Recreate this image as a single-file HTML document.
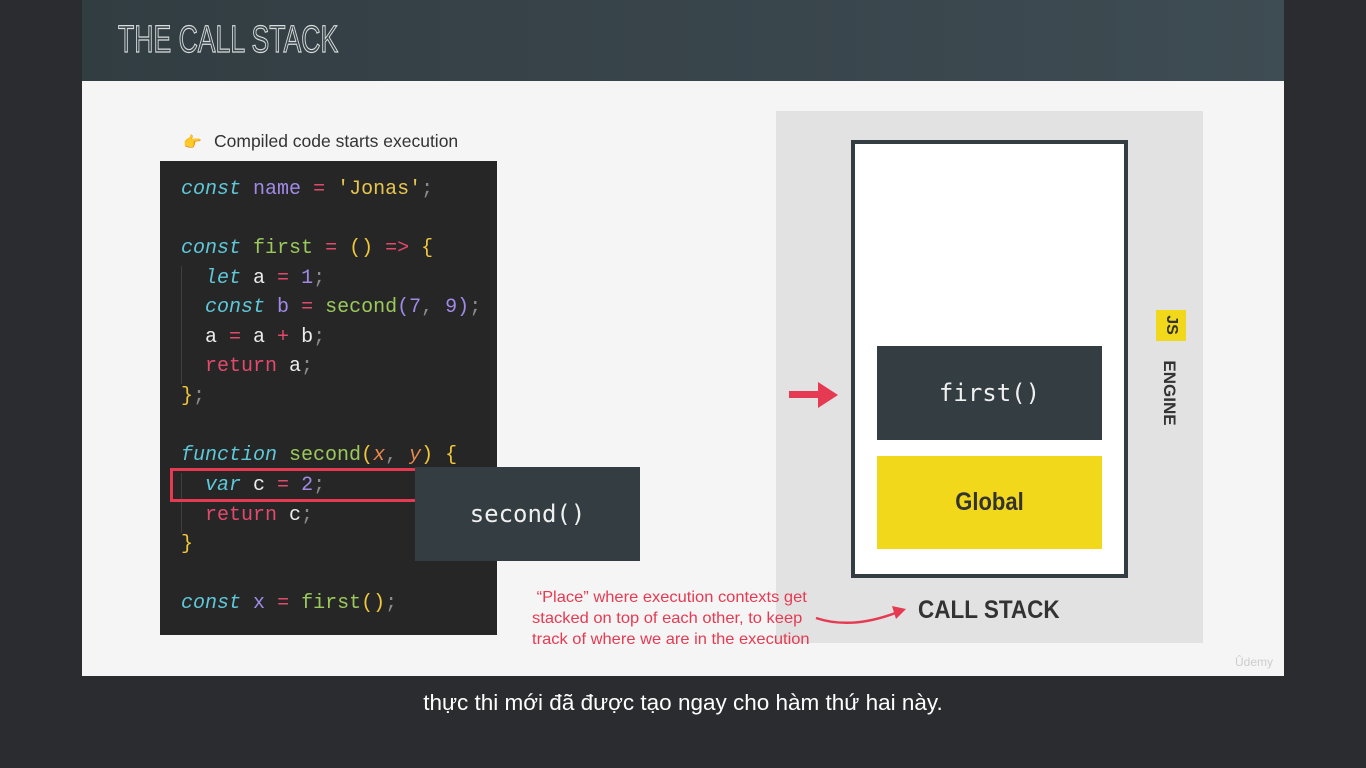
<!DOCTYPE html>
<html><head><meta charset="utf-8"><style>
*{margin:0;padding:0;box-sizing:border-box}
body{width:1366px;height:768px;background:#2b2c2f;position:relative;overflow:hidden;font-family:"Liberation Sans",sans-serif}
.abs{position:absolute}
#hdr{left:82px;top:0;width:1202px;height:81px;background:linear-gradient(90deg,#323d42,#3e4c53)}
#title{left:118px;top:19px;font-family:"Liberation Sans Narrow","Liberation Sans",sans-serif;font-size:38px;color:#3a464c;-webkit-text-stroke:1.2px #d8dcdc;transform:scaleX(0.7);transform-origin:0 0;white-space:nowrap}
#slide{left:82px;top:81px;width:1202px;height:595px;background:#f5f5f5}
#code{left:160px;top:161px;width:337px;height:474px;background:#262627}
.ln{position:absolute;left:21px;font-family:"Liberation Mono",monospace;font-size:20px;line-height:30px;white-space:pre;color:#ececec}
.k{color:#5ec8d8;font-style:italic}.v{color:#a08ae6}.o{color:#e24a6c}.s{color:#e8c64e}.f{color:#9cc95c}.p{color:#8a8a8a}.y{color:#f0c83a}.r{color:#e24a6c}
.guide{position:absolute;width:1px;background:#3f3f3f}
.mono{font-family:'DejaVu Sans Mono',monospace;font-size:24px;color:#f0f0f0;text-align:center}
</style></head><body>
<div id="hdr" class="abs"></div>
<div id="title" class="abs">THE CALL STACK</div>
<div id="slide" class="abs"></div>
<div class="abs" style="left:183px;top:133px;font-size:15px;color:#f2a93a">👉</div>
<div class="abs" style="left:214px;top:131px;font-size:17.5px;color:#333">Compiled code starts execution</div>
<div id="code" class="abs">
<div class="guide" style="left:21px;top:105px;height:118px"></div>
<div class="guide" style="left:21px;top:312px;height:60px"></div>
<div class="ln" style="top:14px"><span class="k">const</span> <span class="v">name</span> <span class="o">=</span> <span class="s">'Jonas'</span><span class="p">;</span></div>
<div class="ln" style="top:73px"><span class="k">const</span> <span class="f">first</span> <span class="o">=</span> <span class="y">()</span> <span class="o">=&gt;</span> <span class="y">{</span></div>
<div class="ln" style="top:103px">  <span class="k">let</span> a <span class="o">=</span> <span class="v">1</span><span class="p">;</span></div>
<div class="ln" style="top:132px">  <span class="k">const</span> <span class="v">b</span> <span class="o">=</span> <span class="f">second</span><span class="v">(7</span><span class="p">,</span> <span class="v">9)</span><span class="p">;</span></div>
<div class="ln" style="top:162px">  a <span class="o">=</span> a <span class="o">+</span> b<span class="p">;</span></div>
<div class="ln" style="top:191px">  <span class="r">return</span> a<span class="p">;</span></div>
<div class="ln" style="top:221px"><span class="y">}</span><span class="p">;</span></div>
<div class="ln" style="top:280px"><span class="k">function</span> <span class="f">second</span><span class="y">(</span><span style="color:#e8884a;font-style:italic">x</span><span class="p">,</span> <span style="color:#e8884a;font-style:italic">y</span><span class="y">)</span> <span class="y">{</span></div>
<div class="ln" style="top:310px">  <span class="k">var</span> c <span class="o">=</span> <span class="v">2</span><span class="p">;</span></div>
<div class="ln" style="top:340px">  <span class="r">return</span> c<span class="p">;</span></div>
<div class="ln" style="top:369px"><span class="y">}</span></div>
<div class="ln" style="top:428px"><span class="k">const</span> <span class="v">x</span> <span class="o">=</span> <span class="f">first</span><span class="y">()</span><span class="p">;</span></div>
</div>
<div class="abs" style="left:170px;top:468px;width:250px;height:34px;border:3px solid #e63a52"></div>
<div class="abs mono" style="left:415px;top:467px;width:225px;height:94px;background:#333d42;line-height:94px">second()</div>

<div class="abs" style="left:776px;top:111px;width:427px;height:532px;background:#e2e2e2"></div>
<div class="abs" style="left:851px;top:140px;width:277px;height:438px;background:#fff;border:4px solid #333d42"></div>
<div class="abs mono" style="left:877px;top:346px;width:225px;height:94px;background:#333d42;line-height:94px">first()</div>
<div class="abs" style="left:877px;top:456px;width:225px;height:93px;background:#f1d81a"></div>
<div class="abs" style="left:877px;top:456px;width:225px;height:93px;color:#333;font-weight:bold;font-size:25px;line-height:93px;text-align:center;transform:scaleX(0.88)">Global</div>
<div class="abs" style="left:1156px;top:310px;width:30px;height:31px;background:#f1d81a"></div>
<div class="abs" style="left:1171px;top:325px;transform:translate(-50%,-50%) rotate(90deg);font-weight:bold;font-size:16px;color:#333">JS</div>
<div class="abs" style="left:1169px;top:393px;transform:translate(-50%,-50%) rotate(90deg);font-weight:bold;font-size:17px;color:#333;white-space:nowrap">ENGINE</div>
<svg class="abs" style="left:785px;top:380px" width="60" height="30"><rect x="4" y="11" width="30" height="7" fill="#e63a52"/><polygon points="33,2 53,15 33,28" fill="#e63a52"/></svg>
<div class="abs" style="left:918px;top:596px;font-weight:bold;font-size:25px;color:#333;transform:scaleX(0.9);transform-origin:0 0;white-space:nowrap">CALL STACK</div>
<svg class="abs" style="left:812px;top:600px" width="100" height="30"><path d="M4 18 Q40 30 86 12" stroke="#e63a52" stroke-width="2.5" fill="none"/><polygon points="80,6 94,9 84,19" fill="#e63a52"/></svg>
<div class="abs" style="left:532px;top:587px;width:320px;font-size:16px;line-height:21px;color:#e63a52;text-align:left;transform:scaleX(1.03);transform-origin:0 0;white-space:nowrap">&nbsp;“Place” where execution contexts get<br>stacked on top of each other, to keep<br>track of where we are in the execution</div>
<div class="abs" style="left:1235px;top:655px;font-size:12px;color:#ccc">Ûdemy</div>
<div class="abs" style="left:0;width:1366px;top:690px;text-align:center;color:#fff;font-size:22.5px">thực thi mới đã được tạo ngay cho hàm thứ hai này.</div>
</body></html>
